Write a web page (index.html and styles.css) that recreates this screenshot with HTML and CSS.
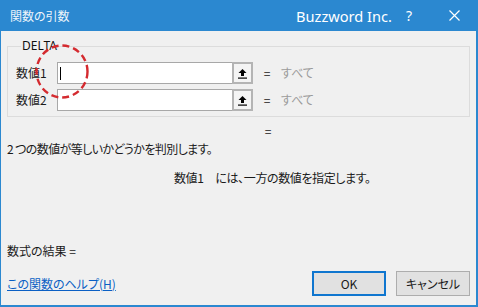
FILE: index.html
```html
<!DOCTYPE html>
<html lang="ja">
<head>
<meta charset="utf-8">
<title>関数の引数</title>
<link rel="stylesheet" href="styles.css">
</head>
<body>
<div class="window">
  <div class="titlebar">
    <span class="title">関数の引数</span>
    <span class="brand">Buzzword Inc.</span>
    <span class="help">?</span>
    <span class="close"><svg width="11" height="11" viewBox="0 0 11 11"><path d="M0.5 0.5 L10.5 10.5 M10.5 0.5 L0.5 10.5" stroke="#fff" stroke-width="1.2" fill="none"/></svg></span>
  </div>
  <div class="content">
    <fieldset class="group">
      <legend class="group-title">DELTA</legend>
      <div class="arg-row">
        <span class="arg-label">数値1</span>
        <div class="ref-input">
          <span class="field"><span class="caret"></span></span>
          <span class="ref-btn"><svg width="11" height="11" viewBox="0 0 11 11"><path d="M5.5 1 L9.5 5 L7 5 L7 8 L4 8 L4 5 L1.5 5 Z" fill="#000"/><rect x="1" y="9.5" width="9" height="1.2" fill="#000"/></svg></span>
        </div>
        <span class="eq">=</span>
        <span class="hint">すべて</span>
      </div>
      <div class="arg-row">
        <span class="arg-label">数値2</span>
        <div class="ref-input">
          <span class="field"></span>
          <span class="ref-btn"><svg width="11" height="11" viewBox="0 0 11 11"><path d="M5.5 1 L9.5 5 L7 5 L7 8 L4 8 L4 5 L1.5 5 Z" fill="#000"/><rect x="1" y="9.5" width="9" height="1.2" fill="#000"/></svg></span>
        </div>
        <span class="eq">=</span>
        <span class="hint">すべて</span>
      </div>
    </fieldset>
    <div class="result-eq"><span class="eq">=</span></div>
    <p class="desc">2 つの数値が等しいかどうかを判別します。</p>
    <p class="arg-desc"><span class="arg-name">数値1</span>には、一方の数値を指定します。</p>
    <p class="result">数式の結果 =</p>
    <div class="footer">
      <a class="help-link" href="#">この関数のヘルプ(H)</a>
      <div class="buttons">
        <button class="btn btn-default" type="button">OK</button>
        <button class="btn" type="button">キャンセル</button>
      </div>
    </div>
  </div>
  <svg class="highlight" width="54" height="55" viewBox="0 0 54 55"><ellipse cx="27" cy="27.5" rx="25.5" ry="26" fill="none" stroke="#d42a2f" stroke-width="2.4" stroke-dasharray="7 4"/></svg>
</div>
</body>
</html>
```

FILE: styles.css
```css
html, body {
  margin: 0;
  padding: 0;
  background: #f0f0f0;
}

body {
  font-family: "Noto Sans CJK JP", "Noto Sans", sans-serif;
  font-size: 12px;
  font-feature-settings: "palt";
  color: #000;
}

.window {
  position: relative;
  width: 478px;
  height: 307px;
  box-sizing: border-box;
  background: #f0f0f0;
  border-left: 1px solid #2b88d0;
  border-right: 2px solid #2b88d0;
  border-bottom: 2px solid #2b88d0;
  overflow: hidden;
}

.titlebar {
  height: 31px;
  background: #2b88d0;
  color: #fff;
  display: flex;
  align-items: center;
}

.title {
  margin-left: 9px;
  font-size: 12px;
  color: #eef5fb;
  line-height: 16px;
}

.brand {
  margin-left: auto;
  font-family: "Noto Sans", sans-serif;
  font-size: 14.6px;
  line-height: 18px;
  color: #fff;
}

.help {
  margin-left: 14px;
  font-family: "Noto Sans", sans-serif;
  font-size: 14px;
  line-height: 18px;
  width: 8px;
}

.close {
  margin-left: 35px;
  margin-right: 16px;
  display: flex;
  align-items: center;
}

.content {
  padding: 7px 6px 0 6px;
  display: flex;
  flex-direction: column;
}

.group {
  margin: 0;
  padding: 8px 0 5px 8px;
  border: 1px solid #dcdcdc;
  min-width: 0;
}

.group-title {
  margin-left: 5px;
  padding: 0 1px;
  line-height: 16px;
  font-family: "Noto Sans", "Noto Sans CJK JP", sans-serif;
  font-size: 12px;
  color: #111;
}

.arg-row {
  display: flex;
  align-items: center;
  height: 22px;
}

.arg-row + .arg-row {
  margin-top: 5px;
}

.arg-label {
  width: 41px;
  line-height: 16px;
  color: #1a1a1a;
}

.ref-input {
  display: flex;
  height: 22px;
  margin-right: 4px;
}

.field {
  width: 176px;
  height: 22px;
  box-sizing: border-box;
  background: #fff;
  border: 1px solid #a8a8a8;
  display: flex;
  align-items: center;
  padding-left: 2px;
}

.caret {
  width: 1px;
  height: 13px;
  background: #000;
}

.ref-btn {
  width: 21px;
  height: 22px;
  box-sizing: border-box;
  border: 2px solid #b4b4b4;
  background: #f4f4f4;
  display: flex;
  align-items: center;
  justify-content: center;
  margin-left: -1px;
}

.eq {
  width: 20px;
  text-align: center;
  line-height: 16px;
  color: #1a1a1a;
}

.hint {
  margin-left: 4px;
  line-height: 16px;
  color: #9b9b9b;
}

.result-eq {
  display: flex;
  margin-top: 6px;
  padding-left: 251px;
  height: 16px;
}

.desc {
  margin: 2px 0 0 0;
  line-height: 16px;
  letter-spacing: -0.6px;
  color: #1a1a1a;
}

.arg-desc {
  margin: 13px 0 0 167px;
  line-height: 16px;
  letter-spacing: -0.4px;
  color: #1a1a1a;
}

.arg-name {
  margin-right: 12px;
}

.result {
  margin: 57px 0 0 0;
  line-height: 16px;
  color: #1a1a1a;
}

.footer {
  display: flex;
  align-items: center;
  margin-top: 12px;
}

.help-link {
  color: #0a5fc4;
  text-decoration: underline;
  line-height: 16px;
}

.buttons {
  margin-left: auto;
  display: flex;
  gap: 10px;
}

.btn {
  width: 74px;
  height: 25px;
  box-sizing: border-box;
  margin: 0;
  padding: 0;
  background: #e1e1e1;
  border: 1px solid #adadad;
  font-family: "Noto Sans CJK JP", "Noto Sans", sans-serif;
  font-size: 12px;
  font-feature-settings: "palt";
  color: #1a1a1a;
}

.btn-default {
  border: 2px solid #0f76cf;
}

.highlight {
  position: absolute;
  left: 34px;
  top: 44px;
}
```
